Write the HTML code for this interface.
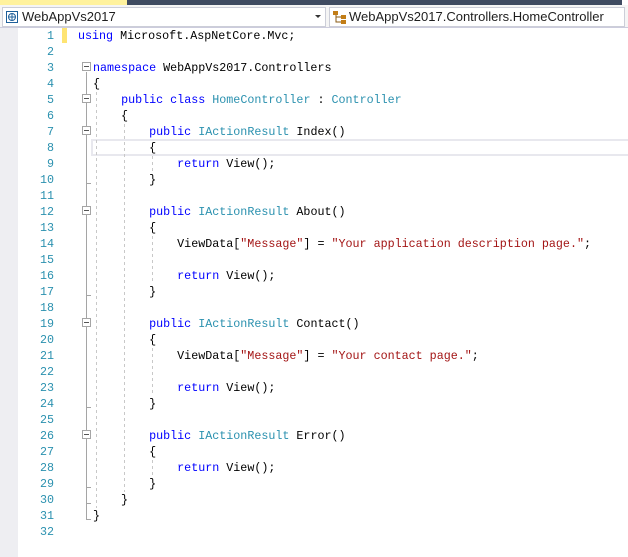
<!DOCTYPE html>
<html><head><meta charset="utf-8"><style>
*{margin:0;padding:0;box-sizing:border-box}
body{width:628px;height:557px;background:#fff;position:relative;overflow:hidden;font-family:"Liberation Sans",sans-serif}
.top1{position:absolute;left:0;top:0;width:127px;height:5px;background:#fff29d}
.top2{position:absolute;left:127px;top:0;width:495px;height:5px;background:#3f4b61}
.bar{position:absolute;left:0;top:5px;width:628px;height:23px;background:#f5f5f5;border-bottom:1px solid #ccd}
.cb{position:absolute;top:7px;height:20px;background:#fff;border:1px solid #ccced8;font-size:13px;line-height:18px;color:#1e1e1e}
.gut{position:absolute;left:0;top:28px;width:18px;height:529px;background:#eeeef2}
.ln{position:absolute;left:20px;width:34px;text-align:right;font-family:"Liberation Mono",monospace;font-size:11.7px;color:#2b91af;line-height:16px}
.code{position:absolute;left:0;font-family:"Liberation Mono",monospace;font-size:11.7px;line-height:16px;white-space:pre;color:#000}
.k{color:#0000ff}.t{color:#2b91af}.s{color:#a31515}
</style></head><body>
<div class="top1"></div><div class="top2"></div>
<div class="bar"></div>
<div class="cb" style="left:2px;width:324px"><svg style="position:absolute;left:3px;top:3px" width="12" height="12"><rect x="0.5" y="0.5" width="11" height="11" fill="#fff" stroke="#1e5f9a"/><circle cx="6" cy="6" r="3.5" fill="none" stroke="#1e5f9a"/><line x1="2.5" y1="6" x2="9.5" y2="6" stroke="#1e5f9a"/><line x1="6" y1="2.5" x2="6" y2="9.5" stroke="#1e5f9a"/></svg><span style="position:absolute;left:19px">WebAppVs2017</span><span style="position:absolute;left:312px;top:7px;border-left:3px solid transparent;border-right:3px solid transparent;border-top:3px solid #333"></span></div>
<div class="cb" style="left:329px;width:296px"><svg style="position:absolute;left:3px;top:3px" width="14" height="13"><rect x="0" y="0" width="5" height="4" fill="#c27d16"/><rect x="8" y="4" width="5" height="4" fill="#c27d16"/><rect x="8" y="9" width="5" height="4" fill="#c27d16"/><path d="M3 4v7h5M3 6h5" stroke="#8a5a10" fill="none"/></svg><span style="position:absolute;left:19px">WebAppVs2017.Controllers.HomeController</span></div>
<div class="gut"></div>
<div style="position:absolute;left:62px;top:28px;width:5px;height:15px;background:#fee472"></div>
<div style="position:absolute;left:91px;top:139px;width:540px;height:17px;border:2px solid #e8e8ee"></div>
<svg style="position:absolute;left:0;top:0" width="628" height="557">
<g stroke="#a5a5a5" fill="#fff">
<line x1="86.5" y1="72" x2="86.5" y2="520"/>
<line x1="86.5" y1="183.5" x2="91" y2="183.5"/>
<line x1="86.5" y1="295.5" x2="91" y2="295.5"/>
<line x1="86.5" y1="407.5" x2="91" y2="407.5"/>
<line x1="86.5" y1="487.5" x2="91" y2="487.5"/>
<line x1="86.5" y1="503.5" x2="91" y2="503.5"/>
<line x1="86.5" y1="519.5" x2="91" y2="519.5"/>
<rect x="82.5" y="62.5" width="8" height="8"/><rect x="82.5" y="94.5" width="8" height="8"/><rect x="82.5" y="126.5" width="8" height="8"/><rect x="82.5" y="206.5" width="8" height="8"/><rect x="82.5" y="318.5" width="8" height="8"/><rect x="82.5" y="430.5" width="8" height="8"/>
</g>
<g stroke="#555" stroke-width="1"><line x1="84" y1="66.5" x2="89" y2="66.5"/><line x1="84" y1="98.5" x2="89" y2="98.5"/><line x1="84" y1="130.5" x2="89" y2="130.5"/><line x1="84" y1="210.5" x2="89" y2="210.5"/><line x1="84" y1="322.5" x2="89" y2="322.5"/><line x1="84" y1="434.5" x2="89" y2="434.5"/></g>
<g stroke="#c8c8c8" stroke-dasharray="3,3">
<line x1="96.5" y1="92" x2="96.5" y2="508"/>
<line x1="124.5" y1="124" x2="124.5" y2="492"/>
<line x1="152.5" y1="156" x2="152.5" y2="172"/>
<line x1="152.5" y1="236" x2="152.5" y2="284"/>
<line x1="152.5" y1="348" x2="152.5" y2="396"/>
<line x1="152.5" y1="460" x2="152.5" y2="476"/>
</g>
</svg>
<div class="ln" style="top:28px">1<br>2<br>3<br>4<br>5<br>6<br>7<br>8<br>9<br>10<br>11<br>12<br>13<br>14<br>15<br>16<br>17<br>18<br>19<br>20<br>21<br>22<br>23<br>24<br>25<br>26<br>27<br>28<br>29<br>30<br>31<br>32</div>
<div class="code" style="left:78px;top:28px"><span class="k">using</span> Microsoft.AspNetCore.Mvc;</div>
<div class="code" style="left:93px;top:60px"><span class="k">namespace</span> WebAppVs2017.Controllers
{
    <span class="k">public</span> <span class="k">class</span> <span class="t">HomeController</span> : <span class="t">Controller</span>
    {
        <span class="k">public</span> <span class="t">IActionResult</span> Index()
        {
            <span class="k">return</span> View();
        }

        <span class="k">public</span> <span class="t">IActionResult</span> About()
        {
            ViewData[<span class="s">"Message"</span>] = <span class="s">"Your application description page."</span>;

            <span class="k">return</span> View();
        }

        <span class="k">public</span> <span class="t">IActionResult</span> Contact()
        {
            ViewData[<span class="s">"Message"</span>] = <span class="s">"Your contact page."</span>;

            <span class="k">return</span> View();
        }

        <span class="k">public</span> <span class="t">IActionResult</span> Error()
        {
            <span class="k">return</span> View();
        }
    }
}</div>
</body></html>
